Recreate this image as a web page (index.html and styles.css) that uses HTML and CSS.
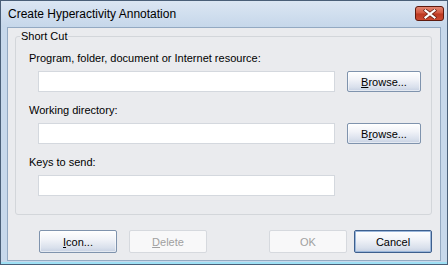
FILE: index.html
```html
<!DOCTYPE html>
<html lang="en">
<head>
  <meta charset="UTF-8">
  <title>Create Hyperactivity Annotation</title>
  <link rel="stylesheet" href="styles.css">
</head>
<body>
  <div class="window">
    <div class="titlebar">
      <span class="title">Create Hyperactivity Annotation</span>
      <div class="close-btn" title="Close">
        <svg width="14" height="10" viewBox="0 0 14 10">
          <path d="M2.5 1.5 L11.5 8.5 M11.5 1.5 L2.5 8.5" stroke="#6a2114" stroke-width="3.6" stroke-linecap="square"/>
          <path d="M2.5 1.5 L11.5 8.5 M11.5 1.5 L2.5 8.5" stroke="#ffffff" stroke-width="2.2" stroke-linecap="square"/>
        </svg>
      </div>
    </div>

    <div class="client">
      <fieldset class="group">
        <legend>Short Cut</legend>
        <div class="fields">
          <label class="field-label">Program, folder, document or Internet resource:</label>
          <div class="field-row">
            <input type="text" class="text-input">
            <button class="btn"><u>B</u>rowse...</button>
          </div>

          <label class="field-label">Working directory:</label>
          <div class="field-row">
            <input type="text" class="text-input">
            <button class="btn">B<u>r</u>owse...</button>
          </div>

          <label class="field-label">Keys to send:</label>
          <div class="field-row">
            <input type="text" class="text-input">
          </div>
        </div>
      </fieldset>

      <div class="footer">
        <button class="btn btn-wide"><u>I</u>con...</button>
        <button class="btn btn-wide" disabled><u>D</u>elete</button>
        <div class="spacer"></div>
        <button class="btn btn-wide" disabled>OK</button>
        <button class="btn btn-wide btn-default">Cancel</button>
      </div>
    </div>
  </div>
</body>
</html>
```

FILE: styles.css
```css
body {
  margin: 0;
  padding: 0;
  font-family: 'Liberation Sans', Arial, sans-serif;
  font-size: 11px;
  background: #ffffff;
}

.window {
  width: 448px;
  height: 265px;
  box-sizing: border-box;
  border: 1px solid #4a5f78;
  background: #c7d8eb;
  display: flex;
  flex-direction: column;
  padding: 0 6px 3px 6px;
  box-shadow: inset 0 -2px 0 #9fe0f4;
}

.titlebar {
  height: 26px;
  display: flex;
  align-items: center;
  justify-content: space-between;
  background: linear-gradient(to bottom, #dbe6f3, #c6d7ea);
  margin: 0 -6px;
  padding: 0 3px 0 7px;
}

.title {
  font-size: 12px;
  color: #000000;
  margin-top: -1px;
}

.close-btn {
  width: 27px;
  height: 13px;
  border: 1px solid #5e1a0e;
  border-radius: 3px;
  background-color: #cc4a32;
  background-image: linear-gradient(to bottom, #e28672 0%, #d2563e 48%, #bb3820 52%, #cc4a32 100%);
  display: flex;
  align-items: center;
  justify-content: center;
  margin-top: -1px;
}

.client {
  flex: 1;
  background: #eaebee;
  border: 1px solid #93a9c2;
  padding: 0 8px 0 7px;
}

.group {
  margin: 2px 0 0 0;
  padding: 0;
  border: 1px solid #d3d6da;
  border-radius: 3px;
  height: 185px;
  box-sizing: border-box;
}

.group legend {
  margin-left: 4px;
  padding: 0 1px;
  line-height: 13px;
}

.fields {
  display: flex;
  flex-direction: column;
  padding: 9px 0 0 13px;
}

.field-label {
  line-height: 13px;
  margin-bottom: 6px;
}

.field-row {
  display: flex;
  gap: 12px;
  margin-left: 9px;
  margin-bottom: 12px;
}

.text-input {
  width: 297px;
  height: 21px;
  box-sizing: border-box;
  border: 1px solid #d4d8de;
  background: #ffffff;
  margin: 0;
  padding: 0 2px;
}

.btn {
  width: 74px;
  height: 21px;
  padding: 0;
  font-family: 'Liberation Sans', Arial, sans-serif;
  font-size: 11px;
  color: #000000;
  border: 1px solid #7f93ad;
  border-radius: 2px;
  background: linear-gradient(to bottom, #ffffff 0%, #f1f3f8 40%, #d9e0ec 80%, #c6d0e2 100%);
  box-shadow: inset 0 0 0 1px rgba(255, 255, 255, 0.5);
}

.btn u {
  text-decoration-thickness: 1px;
}

.btn:disabled {
  color: #a0a0a0;
  border-color: #d6d9de;
  background: #f8f8f9;
  box-shadow: none;
}

.footer {
  display: flex;
  gap: 12px;
  padding: 15px 0 0 24px;
}

.btn-wide {
  width: 78px;
  height: 23px;
}

.spacer {
  flex: 1;
}

.footer .btn-default {
  margin-left: -5px;
  border: 1px solid #3d5f8e;
  box-shadow: inset 0 0 0 1px #9ab6da;
}
```
